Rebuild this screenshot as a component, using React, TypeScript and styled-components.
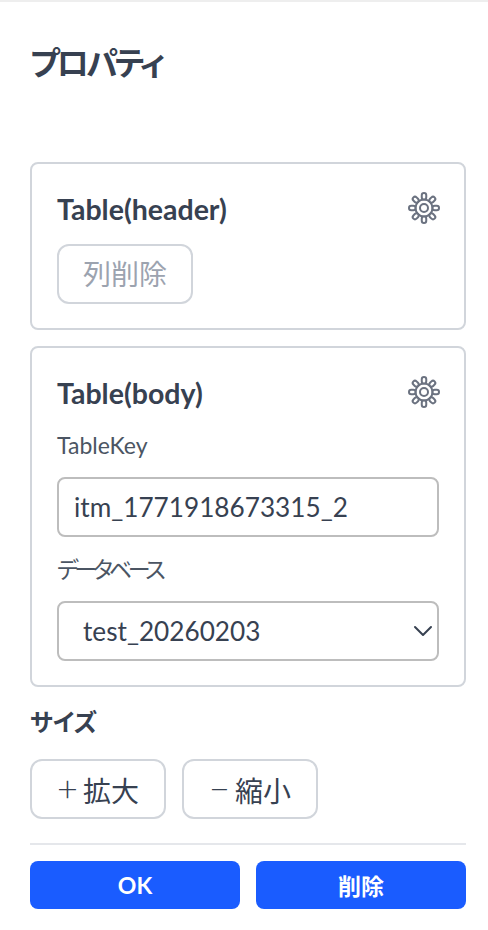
import React from "react";
import styled, { createGlobalStyle } from "styled-components";
import { ChevronDown } from "lucide-react";

const GlobalStyle = createGlobalStyle`
    html, body {
        margin: 0;
        padding: 0;
        background: #fff;
    }
    * {
        box-sizing: border-box;
    }
`

const Panel = styled.div`
    width: 488px;
    height: 930px;
    border-top: 2px solid #eeeeee;
    padding: 0 22px 0 30px;
    font-family: "Lato", "Noto Sans CJK JP", sans-serif;
    font-feature-settings: "palt";
    color: #374151;
`

const Title = styled.h2`
    margin: 0;
    padding-top: 42px;
    height: 160px;
    font-size: 32px;
    line-height: 38px;
    font-weight: 700;
    letter-spacing: -3px;
`

const Card = styled.section`
    border: 2px solid #d1d5db;
    border-radius: 8px;
    padding: 25px 25px 24px;
    margin-bottom: 16px;
`

const CardHeader = styled.div`
    display: flex;
    align-items: flex-start;
    justify-content: space-between;
    height: 55px;
    svg {
        margin: 3px -1px 0 0;
    }
`

const CardTitle = styled.div`
    font-size: 28.5px;
    line-height: 40px;
    font-weight: 700;
`

const GhostButton = styled.button<{ $muted?: boolean }>`
    width: 136px;
    height: 60px;
    padding: 0;
    border: 2px solid #d1d5db;
    border-radius: 12px;
    background: #fff;
    font-family: inherit;
    font-feature-settings: inherit;
    font-size: 28px;
    line-height: 34px;
    color: ${(p) => (p.$muted ? "#9ca3af" : "#374151")};
`

const Sign = styled.span`
    font-size: 36px;
    font-weight: 300;
    line-height: 1;
    margin-right: 5px;
`

const FieldLabel = styled.label<{ $tight?: boolean }>`
    display: block;
    font-size: 23px;
    line-height: 32px;
    color: #4b5563;
    margin: 1px 0 16px;
    letter-spacing: ${(p) => (p.$tight ? "-4.2px" : "normal")};
`

const TextInput = styled.input`
    display: block;
    width: 100%;
    height: 60px;
    border: 2px solid #bdbdbd;
    border-radius: 8px;
    padding: 0 15px;
    font-family: inherit;
    font-size: 26.2px;
    color: #374151;
    margin-bottom: 16px;
`

const SelectWrap = styled.div`
    position: relative;
    color: #374151;
    svg {
        position: absolute;
        top: 14px;
        right: 0;
        pointer-events: none;
    }
`

const Select = styled.select`
    display: block;
    width: 100%;
    height: 60px;
    border: 2px solid #bdbdbd;
    border-radius: 8px;
    padding: 0 24px;
    appearance: none;
    font-family: inherit;
    font-size: 26.2px;
    color: #374151;
    background: #fff;
`

const SectionTitle = styled.div`
    font-size: 24px;
    font-weight: 700;
    line-height: 36px;
    margin: 17px 0 19px;
`

const ButtonRow = styled.div`
    display: flex;
    gap: 16px;
`

const Footer = styled.div`
    display: flex;
    gap: 16px;
    margin-top: 24px;
    padding-top: 16px;
    border-top: 2px solid #e5e7eb;
`

const PrimaryButton = styled.button`
    flex: 1;
    height: 48px;
    border: 0;
    border-radius: 8px;
    background: #1a5cff;
    color: #fff;
    font-family: inherit;
    font-size: 23px;
    font-weight: 700;
`

const GearIcon = () => {
    const teeth = [0, 45, 90, 135, 180, 225, 270, 315]
    return (
        <svg width="32" height="32" viewBox="0 0 32 32" fill="none" stroke="#6b7280" strokeWidth="2">
            <circle cx="16" cy="16" r="4" />
            <circle cx="16" cy="16" r="8.5" />
            {teeth.map((angle) => (
                <rect key={angle} x="13.75" y="1" width="4.5" height="6.5" rx="2.25" fill="#fff" transform={`rotate(${angle} 16 16)`} />
            ))}
        </svg>
    )
}

export default function App() {
    return (
        <Panel>
            <GlobalStyle />
            <Title>プロパティ</Title>
            <Card>
                <CardHeader>
                    <CardTitle>Table(header)</CardTitle>
                    <GearIcon />
                </CardHeader>
                <GhostButton $muted>列削除</GhostButton>
            </Card>
            <Card>
                <CardHeader>
                    <CardTitle>Table(body)</CardTitle>
                    <GearIcon />
                </CardHeader>
                <FieldLabel>TableKey</FieldLabel>
                <TextInput defaultValue="itm_1771918673315_2" />
                <FieldLabel $tight>データベース</FieldLabel>
                <SelectWrap>
                    <Select defaultValue="test_20260203">
                        <option>test_20260203</option>
                    </Select>
                    <ChevronDown size={32} strokeWidth={1.5} />
                </SelectWrap>
            </Card>
            <SectionTitle>サイズ</SectionTitle>
            <ButtonRow>
                <GhostButton><Sign>+</Sign>拡大</GhostButton>
                <GhostButton><Sign>−</Sign>縮小</GhostButton>
            </ButtonRow>
            <Footer>
                <PrimaryButton>OK</PrimaryButton>
                <PrimaryButton>削除</PrimaryButton>
            </Footer>
        </Panel>
    )
}
